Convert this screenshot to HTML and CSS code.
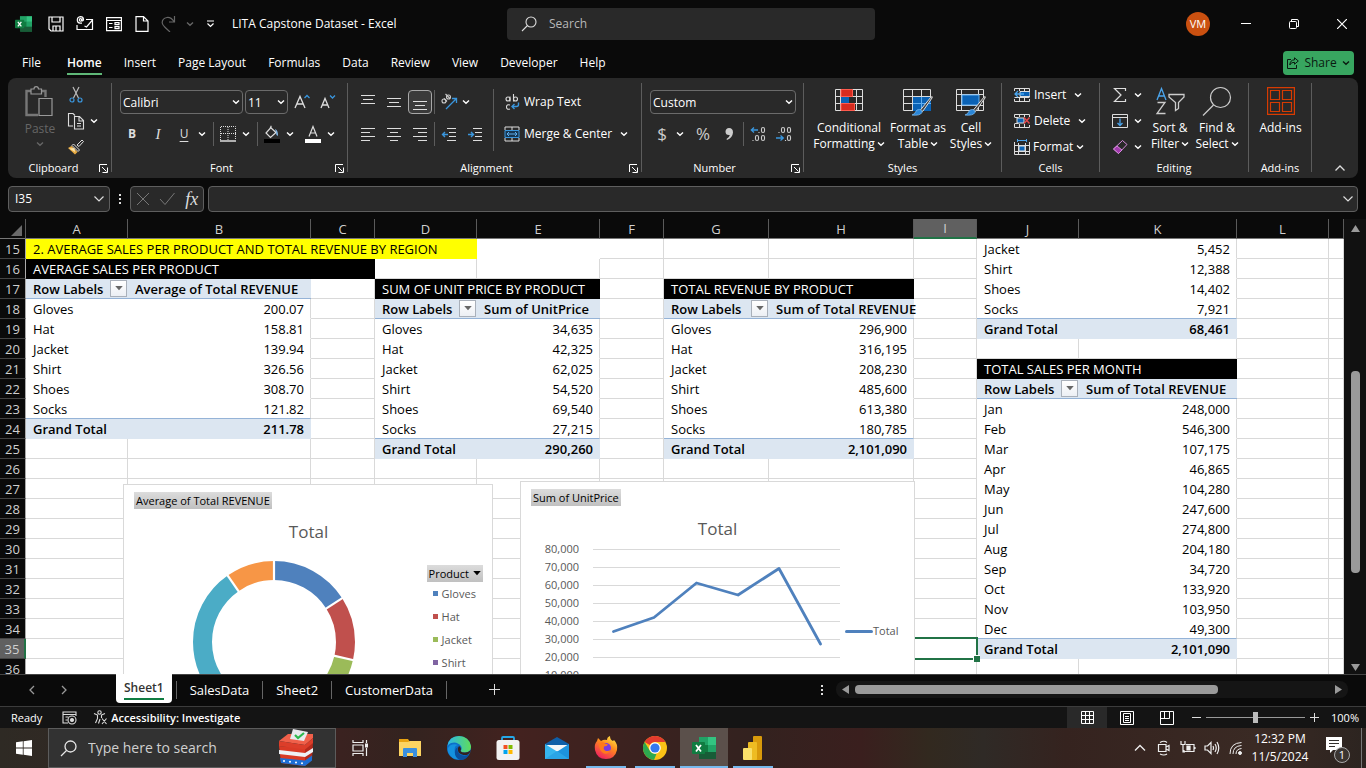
FILE: index.html
```html
<!DOCTYPE html>
<html lang="en">
<head>
<meta charset="utf-8">
<title>LITA Capstone Dataset - Excel</title>
<link rel="stylesheet" href="styles.css">
</head>
<body>
<svg class="defs" aria-hidden="true">
  <symbol id="chev" viewBox="0 0 8 8"><path d="M1 2.500l3 2.800 3-2.800" fill="none" stroke="currentColor" stroke-width="1.400"/></symbol>
  <symbol id="launch" viewBox="0 0 9 9"><path d="M.5 8V.5H8M3 3l4.500 4.500M8.500 3.500v5h-5" fill="none" stroke="currentColor"/></symbol>
  <symbol id="tri" viewBox="0 0 9 6"><path d="M0 0h9L4.500 5z" fill="currentColor"/></symbol>
  <symbol id="excel" viewBox="0 0 24 22">
    <path d="M7 0h17v22H7z" fill="#185c37"/><path d="M7 0h9v8H7z" fill="#21a366"/><path d="M16 0h8v8h-8z" fill="#33c481"/><path d="M7 8h9v7H7z" fill="#107c41"/><path d="M16 8h8v7h-8z" fill="#21a366"/><path d="M8 15h16v7H8z" fill="#185c37"/>
    <rect y="5" width="13" height="12" rx="1" fill="#107c41"/><path d="M4 8l5 6.500M9 8l-5 6.500" stroke="#fff" stroke-width="1.800"/>
  </symbol>
</svg>

<header class="titlebar">
  <div class="quick">
    <svg class="applogo" width="17" height="16"><use href="#excel"/></svg>
    <button class="q" aria-label="Save"><svg width="16" height="16" fill="none" stroke="#fff" stroke-width="1.200"><path d="M1 1h14v14H3l-2-2zM4 1v5h8V1M5 15v-5h7v5M8 10v5"/></svg></button>
    <button class="q wide" aria-label="Email"><svg width="18" height="16" fill="none" stroke="#fff" stroke-width="1.200"><path d="M1 9v4.500h15.500V3.500H10M8.500 10l2 1L16.500 4"/><path d="M6 2.500v2.300q1.500.4 1.500-1.600Q7.200.6 4.500.6 1.300 1 1.300 4T4 7.200h2"/><circle cx="4.500" cy="3.900" r="1.200"/></svg></button>
    <button class="q" aria-label="Form"><svg width="16" height="16" fill="none" stroke="#fff" stroke-width="1.200"><path d="M.6 1.600h14.800v13H.6zM.6 4.500h14.800M3 7.500h3.500M3 11.500h3.500M9 6.700h4v2H9zM9 10.700h4v2H9z"/></svg></button>
    <button class="q" aria-label="New"><svg width="14" height="16" fill="none" stroke="#fff" stroke-width="1.200"><path d="M1 .6h7.500L13 5v10.400H1zM8.500.6V5H13"/></svg></button>
    <button class="q dim redo" aria-label="Redo"><svg width="15" height="16" fill="none" stroke="currentColor" stroke-width="1.200"><path d="M13.500 0v6H8M13 5.500Q10 1 6 1.500 1 2.500 1.200 7q.3 2 3 4.500L9 16"/></svg><svg width="8" height="8"><use href="#chev"/></svg></button>
    <button class="q custom" aria-label="Customize toolbar"><svg width="9" height="8" fill="none" stroke="#fff" stroke-width="1.200"><path d="M1 1h7M1.500 3.500l3 3 3-3"/></svg></button>
    <h1 class="doc">LITA Capstone Dataset - Excel</h1>
  </div>
  <label class="search"><svg width="16" height="16" fill="none" stroke="#ddd" stroke-width="1.100"><circle cx="10" cy="6" r="5"/><path d="M6.500 9.500L1 15"/></svg><input type="search" placeholder="Search" aria-label="Search"></label>
  <div class="window">
    <button class="avatar" aria-label="Account">VM</button>
    <button class="wbtn" aria-label="Minimize"><svg width="10" height="10"><path d="M0 4.500h10" stroke="#fff"/></svg></button>
    <button class="wbtn" aria-label="Restore"><svg width="10" height="10" fill="none" stroke="#fff"><rect x=".5" y="2.500" width="7" height="7" rx="1"/><path d="M2.500 2V.5H8q1.500 0 1.500 1.500v5.500H8"/></svg></button>
    <button class="wbtn" aria-label="Close"><svg width="10" height="10"><path d="M0 0l10 10M10 0L0 10" stroke="#fff" stroke-width="1.200"/></svg></button>
  </div>
</header>

<nav class="tabs">
  <a href="#file" class="first">File</a><a href="#home" class="on">Home</a><a href="#insert">Insert</a><a href="#layout">Page Layout</a><a href="#formulas">Formulas</a><a href="#data">Data</a><a href="#review">Review</a><a href="#view">View</a><a href="#developer">Developer</a><a href="#help">Help</a>
  <button class="share"><svg width="12" height="12" fill="none" stroke="#0a1a10"><path d="M4 2.500H.5v9h9V8M7.500.8L11.300 4 7.500 7.200V5.300Q4 5 2.800 8 3 3 7.500 2.800z"/></svg>Share<svg width="8" height="8"><use href="#chev"/></svg></button>
</nav>

<section class="ribbon">
  <div class="group g-clip">
    <div class="body three">
      <button class="big dim paste"><svg width="32" height="32" fill="none" stroke="#999" stroke-width="1.200"><path d="M7 5H2.500v24H14M17 5h4.500v6" stroke-width="2.400" stroke="#777"/><path d="M7 3h3q0-2.400 2.200-2.400T14.500 3h3v5H7z"/><path d="M15 12.500h13v17H15z"/></svg><span>Paste</span><svg width="8" height="8"><use href="#chev"/></svg></button>
      <div class="col">
        <div class="row"><button class="b" aria-label="Cut"><svg width="16" height="18" fill="none" stroke="#bbb" stroke-width="1.200"><path d="M5 1l5.500 11M11 1L5.500 12"/><g stroke="#3a96dd"><circle cx="4" cy="14" r="2"/><circle cx="12" cy="14" r="2"/></g></svg></button></div>
        <div class="row"><button class="b" aria-label="Copy"><svg width="18" height="18" fill="none" stroke="#ddd" stroke-width="1.100"><path d="M6 14H1.500V1.500H6l2 2M7.500 4.500h5l4 4V17h-9zM12 4.500V9h4.500M10 11.500h4M10 14h4"/></svg></button><button class="c" aria-label="Copy options"><svg width="8" height="8"><use href="#chev"/></svg></button></div>
        <div class="row"><button class="b" aria-label="Format Painter"><svg width="18" height="18"><path d="M10 7l5-5 1.500 1.500-4.500 5z" fill="none" stroke="#ddd"/><path d="M6.500 6l6 6-1.500 1.500-6-6z" fill="none" stroke="#ddd"/><path d="M4.500 8l6 6L8 16.500 1 10z" fill="#e8ab43"/><path d="M2 10.500l5.500-.5L8 14z" fill="#fbe3a8"/></svg></button></div>
      </div>
    </div>
    <div class="foot"><span>Clipboard</span><button class="l" aria-label="Clipboard options"><svg width="9" height="9"><use href="#launch"/></svg></button></div>
  </div>
  <i class="sep"></i>
  <div class="group g-font">
    <div class="body two">
      <div class="row near">
        <label class="pick"><select class="face" aria-label="Font"><option>Calibri</option></select><svg width="8" height="8"><use href="#chev"/></svg></label>
        <label class="pick"><select class="size" aria-label="Font size"><option>11</option></select><svg width="8" height="8"><use href="#chev"/></svg></label>
        <button class="b" aria-label="Increase font size"><svg width="18" height="16" fill="none" stroke="#ddd"><path d="M2 14L7 2.500 12 14M4 10h6.300" stroke-width="1.300"/><path d="M11.500 4L14 1.500 16.500 4" stroke="#3a96dd" stroke-width="1.300"/></svg></button>
        <button class="b" aria-label="Decrease font size"><svg width="18" height="16" fill="none" stroke="#ddd"><path d="M2 14L6 4.500 10 14M3.500 11h5" stroke-width="1.300"/><path d="M11 1.500L13.500 4 16 1.500" stroke="#3a96dd" stroke-width="1.300"/></svg></button>
      </div>
      <div class="row">
        <button class="b strong">B</button><button class="b ital gap2">I</button><button class="b under gap2">U</button><button class="c" aria-label="Underline options"><svg width="8" height="8"><use href="#chev"/></svg></button>
        <i class="vs"></i>
        <button class="b" aria-label="Borders"><svg width="16" height="16" fill="none" stroke="#ddd"><path d="M.5 14V.5h15V14M8 1v13M1 7.500h15" stroke-dasharray="1 1"/><path d="M0 15h16" stroke-width="1.500"/></svg></button><button class="c" aria-label="Border options"><svg width="8" height="8"><use href="#chev"/></svg></button>
        <i class="vs"></i>
        <button class="b" aria-label="Fill colour"><svg width="18" height="18"><path d="M7 2l6 5.500-5.500 5-4.500-4.500 5-5.500V.8" fill="none" stroke="#ddd" stroke-width="1.200"/><path d="M12 4q3.500 1.500 2.800 7-2-1-1.800-4z" fill="#83b9e8"/><path d="M1 14h16v4H1z" fill="#000"/></svg></button><button class="c" aria-label="Fill options"><svg width="8" height="8"><use href="#chev"/></svg></button>
        <button class="b gap5" aria-label="Font colour"><svg width="18" height="18"><path d="M5 11.500L9 1.500l4 10M6.500 8h5" fill="none" stroke="#ddd" stroke-width="1.200"/><path d="M1 14h16v4H1z" fill="#fff"/></svg></button><button class="c" aria-label="Font colour options"><svg width="8" height="8"><use href="#chev"/></svg></button>
      </div>
    </div>
    <div class="foot"><span>Font</span><button class="l" aria-label="Font options"><svg width="9" height="9"><use href="#launch"/></svg></button></div>
  </div>
  <i class="sep"></i>
  <div class="group g-align">
    <div class="body">
      <div class="two">
        <div class="row even">
          <button class="b" aria-label="Top align"><svg width="16" height="16" stroke="#ddd"><path d="M1 1.500h14M3 5.500h10M1 9.500h14"/></svg></button>
          <button class="b" aria-label="Middle align"><svg width="16" height="16" stroke="#ddd"><path d="M1 4.500h14M3 8.500h10M1 12.500h14"/></svg></button>
          <button class="b boxed" aria-label="Bottom align"><svg width="16" height="16" stroke="#ddd"><path d="M1 7.500h14M3 11.500h10M1 15.500h14"/></svg></button>
          <i class="vs tight"></i>
          <button class="b" aria-label="Orientation"><svg width="18" height="18" fill="none" stroke="#3a96dd" stroke-width="1.300"><path d="M6 16L16 6M12 5.500h4.500V10"/><g stroke="#ccc" stroke-width="1.100"><circle cx="4" cy="8" r="2"/><path d="M4 5.500l3 3"/><circle cx="8.500" cy="4" r="2"/><path d="M5.500 1l4.500 4.500"/></g></svg></button><button class="c snug" aria-label="Orientation options"><svg width="8" height="8"><use href="#chev"/></svg></button>
        </div>
        <div class="row even">
          <button class="b" aria-label="Align left"><svg width="16" height="16" stroke="#ddd"><path d="M1 2.500h14M1 6.500h9M1 10.500h14M1 14.500h9"/></svg></button>
          <button class="b" aria-label="Center"><svg width="16" height="16" stroke="#ddd"><path d="M1 2.500h14M4 6.500h8M1 10.500h14M4 14.500h8"/></svg></button>
          <button class="b" aria-label="Align right"><svg width="16" height="16" stroke="#ddd"><path d="M1 2.500h14M6 6.500h9M1 10.500h14M6 14.500h9"/></svg></button>
          <i class="vs tight"></i>
          <button class="b" aria-label="Decrease indent"><svg width="16" height="16" stroke="#ddd" fill="none"><path d="M6 2.500h9M8 6.500h7M8 10.500h7M6 14.500h9"/><path d="M7 8.500H1.500M4 6L1.500 8.500 4 11" stroke="#3a96dd" stroke-width="1.400"/></svg></button>
          <button class="b" aria-label="Increase indent"><svg width="16" height="16" stroke="#ddd" fill="none"><path d="M6 2.500h9M8 6.500h7M8 10.500h7M6 14.500h9"/><path d="M1 8.500h5.500M4 6l2.500 2.500L4 11" stroke="#3a96dd" stroke-width="1.400"/></svg></button>
        </div>
      </div>
      <i class="mid"></i>
      <div class="two wraps">
        <button class="wide-b"><svg width="16" height="18" fill="none" stroke="#ddd" stroke-width="1.100"><circle cx="4" cy="6" r="2"/><path d="M6 3.500v5M9.500 1v7.500"/><circle cx="11.500" cy="6" r="2"/><path d="M6 12Q2.500 11 2.500 14T6 16"/><path d="M14.500 9.500v2q0 2-2 2H8M10.500 11L8 13.500l2.500 2.500" stroke="#3a96dd" stroke-width="1.400"/></svg>Wrap Text</button>
        <button class="wide-b"><svg width="16" height="16" fill="none" stroke="#ddd"><path d="M1 4V1h14v3M1 12v3h14v-3M8 1v3M8 12v3"/><path d="M1 4.500h14v7H1z" fill="#16354f" stroke="#3a96dd"/><path d="M3 8h10M5 6L3 8l2 2M11 6l2 2-2 2" stroke="#5fb0f0"/></svg>Merge &amp; Center<svg class="far" width="8" height="8"><use href="#chev"/></svg></button>
      </div>
    </div>
    <div class="foot"><span>Alignment</span><button class="l" aria-label="Alignment options"><svg width="9" height="9"><use href="#launch"/></svg></button></div>
  </div>
  <i class="sep"></i>
  <div class="group g-num">
    <div class="body two">
      <div class="row"><label class="pick"><select class="fmt" aria-label="Number format"><option>Custom</option></select><svg width="8" height="8"><use href="#chev"/></svg></label></div>
      <div class="row">
        <button class="b glyph">$</button><button class="c" aria-label="Currency options"><svg width="8" height="8"><use href="#chev"/></svg></button>
        <button class="b glyph gap5" aria-label="Percent">%</button>
        <button class="b gap2" aria-label="Comma style"><svg width="10" height="16"><path d="M5 2q4 .2 4 4.500Q8.500 12 3 14l-.5-1q3-1.600 3.300-4Q1.500 9.500 1.500 5.500 1.800 2.200 5 2z" fill="#ccc"/></svg></button>
        <i class="vs tight"></i>
        <button class="b dec" aria-label="Increase decimal"><svg width="16" height="16" fill="none" stroke="#ccc" stroke-width="1.100"><rect x="11.500" y="1.500" width="3" height="5" rx="1.500"/><rect x="5.500" y="9.500" width="3" height="5" rx="1.500"/><rect x="11.500" y="9.500" width="3" height="5" rx="1.500"/><path d="M9 6v1M3 14v1"/><path d="M8 4H1M4 1.500L1.300 4 4 6.500" stroke="#3a96dd" stroke-width="1.300"/></svg></button>
        <button class="b gap2" aria-label="Decrease decimal"><svg width="16" height="16" fill="none" stroke="#ccc" stroke-width="1.100"><rect x="5.500" y="1.500" width="3" height="5" rx="1.500"/><rect x="11.500" y="1.500" width="3" height="5" rx="1.500"/><rect x="11.500" y="9.500" width="3" height="5" rx="1.500"/><path d="M3 6v1M9.500 14v1"/><path d="M0 12h7M4.500 9.500L7.300 12l-2.800 2.500" stroke="#3a96dd" stroke-width="1.300"/></svg></button>
      </div>
    </div>
    <div class="foot"><span>Number</span><button class="l" aria-label="Number options"><svg width="9" height="9"><use href="#launch"/></svg></button></div>
  </div>
  <i class="sep"></i>
  <div class="group g-style">
    <div class="body">
      <button class="big w80"><svg width="30" height="30"><path d="M1.500 3.500h27v21h-27zM6.500 3.500v21M14.500 3.500v21M22.500 3.500v21M1.500 10.500h27M1.500 17.500h27" fill="none" stroke="#ddd"/><path d="M7 3.500h11.500v7H7zM7 17.500h13.500v7H7z" fill="#d62b1f" stroke="#ff5a4d"/><path d="M7 11h8v6H7z" fill="#0a62b5"/></svg><span>Conditional<br>Formatting<svg width="8" height="8"><use href="#chev"/></svg></span></button>
      <button class="big w58"><svg width="32" height="30"><path d="M1.500 3.500h27v21h-27zM10.500 3.500v21M19.500 3.500v21M1.500 10.500h27M1.500 17.500h27" fill="none" stroke="#ddd"/><path d="M11 11h18v14H11z" fill="#0a62b5"/><path d="M11 17.500h18M19.500 11v13" stroke="#61aef0"/><path d="M29 11q2-1 1 1L21 25q-2 1.500-3-.5z" fill="#444" stroke="#ddd"/><path d="M17.500 23.500q3 .5 2.500 3-2 3.500-10 2.500 3-1 3.500-3 1-2.800 4-2.500z" fill="#2a86d8" stroke="#7fc0f5" stroke-width=".7"/></svg><span>Format as<br>Table<svg width="8" height="8"><use href="#chev"/></svg></span></button>
      <button class="big w48"><svg width="32" height="30"><path d="M1.500 3.500h27v21h-27zM6.500 3.500v21M23.500 3.500v21M1.500 8.500h27M1.500 19.500h27" fill="none" stroke="#ddd"/><path d="M7 9h17v10H7z" fill="#0a62b5" stroke="#61aef0"/><path d="M29 11q2-1 1 1L21 25q-2 1.500-3-.5z" fill="#444" stroke="#ddd"/><path d="M17.500 23.500q3 .5 2.500 3-2 3.500-10 2.500 3-1 3.500-3 1-2.800 4-2.500z" fill="#2a86d8" stroke="#7fc0f5" stroke-width=".7"/></svg><span>Cell<br>Styles<svg width="8" height="8"><use href="#chev"/></svg></span></button>
    </div>
    <div class="foot"><span>Styles</span></div>
  </div>
  <i class="sep"></i>
  <div class="group g-cells">
    <div class="body col">
      <button class="wide-b cell"><svg width="16" height="16" fill="none" stroke="#ddd"><path d="M.5 4V1.500h15V4M.5 12v2.500h15V12M5.500 1v3M10.500 1v3M5.500 11v3M10.500 11v3M.5 10.500h15"/><path d="M6 4.500h10v5H6z" fill="#0a62b5"/><path d="M10 7H1M4 4L1 7l3 3" stroke="#4ba6ee" stroke-width="1.300"/></svg>Insert<svg class="mid-c" width="8" height="8"><use href="#chev"/></svg></button>
      <button class="wide-b cell"><svg width="16" height="16" fill="none" stroke="#ddd"><path d="M.5 4V1.500h15V4M.5 11v3.500h15V12M5.500 1v3M10.500 1v3M5.500 11v3M10.500 11v3M.5 4.500h4M.5 10.500h4"/><path d="M3 5h7v5H3z" fill="#0a62b5"/><path d="M10 4.500l5.500 6M15.500 4.500l-5.500 6" stroke="#e5484d" stroke-width="1.500"/></svg>Delete<svg class="mid-c" width="8" height="8"><use href="#chev"/></svg></button>
      <button class="wide-b cell tightly"><svg width="16" height="16" fill="none" stroke="#ddd"><path d="M.5 3v12.500h15V3M4.500 4v11M11.500 4v11M.5 6.500h15M.5 12.500h15"/><path d="M5 7h6v5H5z" fill="#0a62b5"/><path d="M3.500 0v3M12.500 0v3M4 1.500h8" stroke="#4ba6ee"/></svg>Format<svg width="8" height="8"><use href="#chev"/></svg></button>
    </div>
    <div class="foot"><span>Cells</span></div>
  </div>
  <i class="sep"></i>
  <div class="group g-edit">
    <div class="body">
      <div class="col edit-col">
        <div class="row"><button class="b" aria-label="AutoSum"><svg width="14" height="16" fill="none" stroke="#ddd" stroke-width="1.200"><path d="M12.500 4V1.500h-11L8 8l-6.500 6.500h11V12"/></svg></button><button class="c" aria-label="AutoSum options"><svg width="8" height="8"><use href="#chev"/></svg></button></div>
        <div class="row"><button class="b" aria-label="Fill"><svg width="16" height="16" fill="none" stroke="#ddd"><path d="M.5 1.500h15v13H.5zM.5 4.500h15"/><path d="M8 5.500v7M5.500 10L8 12.500l2.500-2.500" stroke="#4ba6ee" stroke-width="1.300"/></svg></button><button class="c" aria-label="Fill options"><svg width="8" height="8"><use href="#chev"/></svg></button></div>
        <div class="row"><button class="b" aria-label="Clear"><svg width="16" height="16"><path d="M10.500 1.500l4.500 4-8.500 9-5-4.500z" fill="none" stroke="#d58bdc"/><path d="M5 7l5 4-3.500 3.500-5-4.500z" fill="#a23aad" stroke="#d58bdc"/></svg></button><button class="c" aria-label="Clear options"><svg width="8" height="8"><use href="#chev"/></svg></button></div>
      </div>
      <button class="big w46"><svg width="30" height="30" fill="none" stroke-width="1.300"><path d="M2 14L6.500 2.500 11 14M3.500 10h6" stroke="#4ba6ee"/><path d="M2.500 16.500h7.500L2 27.500h8.500" stroke="#ccc"/><path d="M14 8.500h15v2.500l-5.500 5.500v6l-3 2v-8L14 11z" stroke="#ccc"/></svg><span>Sort &amp;<br>Filter<svg width="8" height="8"><use href="#chev"/></svg></span></button>
      <button class="big w48"><svg width="30" height="30" fill="none" stroke="#ccc" stroke-width="1.200"><circle cx="18.500" cy="11.500" r="10"/><path d="M11.500 19L1 29.500"/></svg><span>Find &amp;<br>Select<svg width="8" height="8"><use href="#chev"/></svg></span></button>
    </div>
    <div class="foot"><span>Editing</span></div>
  </div>
  <i class="sep"></i>
  <div class="group g-add">
    <div class="body"><button class="big w63"><svg width="28" height="30" fill="none" stroke="#d83b01" stroke-width="1.200"><path d="M.6 1.600h26.800v26.800H.6zM3.500 4.500h9v9h-9zM15.500 4.500h9v9h-9zM3.500 16.500h9v9h-9zM15.500 16.500h9v9h-9z"/></svg><span>Add-ins</span></button></div>
    <div class="foot"><span>Add-ins</span></div>
  </div>
  <i class="sep"></i>
  <button class="collapse" aria-label="Collapse the ribbon"><svg width="12" height="8" fill="none" stroke="#ddd" stroke-width="1.300"><path d="M1.500 6.500L6 2l4.500 4.500"/></svg></button>
</section>

<section class="formula">
  <label class="name"><input type="text" value="I35" aria-label="Name box"><svg width="12" height="8" fill="none" stroke="#ddd" stroke-width="1.200"><path d="M1.500 1.500L6 6l4.500-4.500"/></svg></label>
  <span class="dots" aria-hidden="true"></span>
  <div class="fx">
    <button aria-label="Cancel"><svg width="14" height="14" stroke="#777" fill="none"><path d="M1 1l12 12M13 1L1 13"/></svg></button>
    <button aria-label="Enter"><svg width="16" height="14" stroke="#777" fill="none"><path d="M1 7l5 5.500L15.500 1"/></svg></button>
    <button class="fn">fx</button>
  </div>
  <label class="bar"><input type="text" aria-label="Formula bar"><svg width="12" height="8" fill="none" stroke="#ddd" stroke-width="1.200"><path d="M1.500 1.500L6 6l4.500-4.500"/></svg></label>
</section>

<main class="work">
  <div class="sheet">
    <table class="grid">
      <colgroup><col class="w26"><col class="w102"><col class="w183"><col class="w64"><col class="w102"><col class="w123"><col class="w64"><col class="w105"><col class="w145"><col class="w63"><col class="w102"><col class="w158"><col class="w92"><col></colgroup>
      <thead><tr><th class="corner"><svg width="11" height="11"><path d="M11 0v11H0z" fill="#6a6a6a"/></svg></th><th>A</th><th>B</th><th>C</th><th>D</th><th>E</th><th>F</th><th>G</th><th>H</th><th class="cur">I</th><th>J</th><th>K</th><th>L</th><th></th></tr></thead>
      <tbody>
        <tr><th>15</th><td colspan="4" class="yel">2. AVERAGE SALES PER PRODUCT AND TOTAL REVENUE BY REGION</td><td class="l"></td><td></td><td></td><td></td><td></td><td class="l">Jacket</td><td class="n">5,452</td><td></td><td></td></tr>
        <tr><th>16</th><td colspan="3" class="blk">AVERAGE SALES PER PRODUCT</td><td></td><td></td><td></td><td></td><td></td><td></td><td class="l">Shirt</td><td class="n">12,388</td><td></td><td></td></tr>
        <tr><th>17</th><td class="hd"><div>Row Labels<button aria-label="Filter"><svg width="8" height="5"><use href="#tri"/></svg></button></div></td><td class="hd">Average of Total REVENUE</td><td></td><td colspan="2" class="blk">SUM OF UNIT PRICE BY PRODUCT</td><td></td><td colspan="2" class="blk">TOTAL REVENUE BY PRODUCT</td><td></td><td class="l">Shoes</td><td class="n">14,402</td><td></td><td></td></tr>
        <tr><th>18</th><td class="l">Gloves</td><td class="n">200.07</td><td></td><td class="hd"><div>Row Labels<button aria-label="Filter"><svg width="8" height="5"><use href="#tri"/></svg></button></div></td><td class="hd">Sum of UnitPrice</td><td></td><td class="hd"><div>Row Labels<button aria-label="Filter"><svg width="8" height="5"><use href="#tri"/></svg></button></div></td><td class="hd">Sum of Total REVENUE</td><td></td><td class="l ln">Socks</td><td class="n ln">7,921</td><td></td><td></td></tr>
        <tr><th>19</th><td class="l">Hat</td><td class="n">158.81</td><td></td><td class="l">Gloves</td><td class="n">34,635</td><td></td><td class="l">Gloves</td><td class="n">296,900</td><td></td><td class="l gt">Grand Total</td><td class="n gt">68,461</td><td></td><td></td></tr>
        <tr><th>20</th><td class="l">Jacket</td><td class="n">139.94</td><td></td><td class="l">Hat</td><td class="n">42,325</td><td></td><td class="l">Hat</td><td class="n">316,195</td><td></td><td></td><td></td><td></td><td></td></tr>
        <tr><th>21</th><td class="l">Shirt</td><td class="n">326.56</td><td></td><td class="l">Jacket</td><td class="n">62,025</td><td></td><td class="l">Jacket</td><td class="n">208,230</td><td></td><td colspan="2" class="blk">TOTAL SALES PER MONTH</td><td></td><td></td></tr>
        <tr><th>22</th><td class="l">Shoes</td><td class="n">308.70</td><td></td><td class="l">Shirt</td><td class="n">54,520</td><td></td><td class="l">Shirt</td><td class="n">485,600</td><td></td><td class="hd"><div>Row Labels<button aria-label="Filter"><svg width="8" height="5"><use href="#tri"/></svg></button></div></td><td class="hd">Sum of Total REVENUE</td><td></td><td></td></tr>
        <tr><th>23</th><td class="l ln">Socks</td><td class="n ln">121.82</td><td></td><td class="l">Shoes</td><td class="n">69,540</td><td></td><td class="l">Shoes</td><td class="n">613,380</td><td></td><td class="l">Jan</td><td class="n">248,000</td><td></td><td></td></tr>
        <tr><th>24</th><td class="l gt">Grand Total</td><td class="n gt">211.78</td><td></td><td class="l ln">Socks</td><td class="n ln">27,215</td><td></td><td class="l ln">Socks</td><td class="n ln">180,785</td><td></td><td class="l">Feb</td><td class="n">546,300</td><td></td><td></td></tr>
        <tr><th>25</th><td></td><td></td><td></td><td class="l gt">Grand Total</td><td class="n gt">290,260</td><td></td><td class="l gt">Grand Total</td><td class="n gt">2,101,090</td><td></td><td class="l">Mar</td><td class="n">107,175</td><td></td><td></td></tr>
        <tr><th>26</th><td></td><td></td><td></td><td></td><td></td><td></td><td></td><td></td><td></td><td class="l">Apr</td><td class="n">46,865</td><td></td><td></td></tr>
        <tr><th>27</th><td></td><td></td><td></td><td></td><td></td><td></td><td></td><td></td><td></td><td class="l">May</td><td class="n">104,280</td><td></td><td></td></tr>
        <tr><th>28</th><td></td><td></td><td></td><td></td><td></td><td></td><td></td><td></td><td></td><td class="l">Jun</td><td class="n">247,600</td><td></td><td></td></tr>
        <tr><th>29</th><td></td><td></td><td></td><td></td><td></td><td></td><td></td><td></td><td></td><td class="l">Jul</td><td class="n">274,800</td><td></td><td></td></tr>
        <tr><th>30</th><td></td><td></td><td></td><td></td><td></td><td></td><td></td><td></td><td></td><td class="l">Aug</td><td class="n">204,180</td><td></td><td></td></tr>
        <tr><th>31</th><td></td><td></td><td></td><td></td><td></td><td></td><td></td><td></td><td></td><td class="l">Sep</td><td class="n">34,720</td><td></td><td></td></tr>
        <tr><th>32</th><td></td><td></td><td></td><td></td><td></td><td></td><td></td><td></td><td></td><td class="l">Oct</td><td class="n">133,920</td><td></td><td></td></tr>
        <tr><th>33</th><td></td><td></td><td></td><td></td><td></td><td></td><td></td><td></td><td></td><td class="l">Nov</td><td class="n">103,950</td><td></td><td></td></tr>
        <tr><th>34</th><td></td><td></td><td></td><td></td><td></td><td></td><td></td><td></td><td></td><td class="l ln">Dec</td><td class="n ln">49,300</td><td></td><td></td></tr>
        <tr><th class="cur">35</th><td></td><td></td><td></td><td></td><td></td><td></td><td></td><td></td><td class="active"></td><td class="l gt">Grand Total</td><td class="n gt">2,101,090</td><td></td><td></td></tr>
        <tr><th>36</th><td></td><td></td><td></td><td></td><td></td><td></td><td></td><td></td><td></td><td></td><td></td><td></td><td></td></tr>
      </tbody>
    </table>

    <figure class="chart donut">
      <button class="field">Average of Total REVENUE</button>
      <figcaption>Total</figcaption>
      <div class="plot">
        <svg width="164" height="164" viewBox="-82 -82 164 164">
          <g fill="none" stroke-width="19" transform="rotate(-90)">
            <circle r="71.500" pathLength="1255.900" stroke="#4f81bd" stroke-dasharray="200.070 1255.900"/>
            <circle r="71.500" pathLength="1255.900" stroke="#c0504d" stroke-dasharray="158.810 1255.900" stroke-dashoffset="-200.070"/>
            <circle r="71.500" pathLength="1255.900" stroke="#9bbb59" stroke-dasharray="139.940 1255.900" stroke-dashoffset="-358.880"/>
            <circle r="71.500" pathLength="1255.900" stroke="#8064a2" stroke-dasharray="326.560 1255.900" stroke-dashoffset="-498.820"/>
            <circle r="71.500" pathLength="1255.900" stroke="#4bacc6" stroke-dasharray="308.700 1255.900" stroke-dashoffset="-825.380"/>
            <circle r="71.500" pathLength="1255.900" stroke="#f79646" stroke-dasharray="121.820 1255.900" stroke-dashoffset="-1134.080"/>
          </g>
          <g stroke="#fff" stroke-width="2.200">
            <path d="M0-60v-23"/><path d="M0-60v-23" transform="rotate(57.300)"/><path d="M0-60v-23" transform="rotate(102.900)"/><path d="M0-60v-23" transform="rotate(143)"/><path d="M0-60v-23" transform="rotate(236.600)"/><path d="M0-60v-23" transform="rotate(325.100)"/>
          </g>
        </svg>
        <div class="legend">
          <button class="field">Product<svg width="8" height="5"><use href="#tri"/></svg></button>
          <ul><li class="s1">Gloves</li><li class="s2">Hat</li><li class="s3">Jacket</li><li class="s4">Shirt</li></ul>
        </div>
      </div>
    </figure>

    <figure class="chart line">
      <button class="field">Sum of UnitPrice</button>
      <figcaption>Total</figcaption>
      <div class="plot">
        <ol class="axis"><li>80,000</li><li>70,000</li><li>60,000</li><li>50,000</li><li>40,000</li><li>30,000</li><li>20,000</li><li>10,000</li></ol>
        <svg width="247" height="144" fill="none">
          <path d="M0 8.500h247M0 26.500h247M0 44.500h247M0 62.500h247M0 80.500h247M0 98.500h247M0 116.500h247M0 134.500h247" stroke="#d9d9d9"/>
          <path d="M20.500 90.500L61 76.500l42.500-34.500L145 54l41-26.500L227.500 103" stroke="#4f81bd" stroke-width="2.800" stroke-linejoin="round" stroke-linecap="round"/>
        </svg>
        <div class="key"><i></i>Total</div>
      </div>
    </figure>
  </div>
  <div class="vscroll"><svg width="9" height="7"><path d="M4.500 0L9 7H0z" fill="#9a9a9a"/></svg><i></i><svg width="9" height="7"><path d="M4.500 7L9 0H0z" fill="#9a9a9a"/></svg></div>
</main>

<footer class="sheets">
  <button class="nav" aria-label="Previous sheet"><svg width="8" height="10" fill="none" stroke="#999" stroke-width="1.300"><path d="M6 1L2 5l4 4"/></svg></button>
  <button class="nav" aria-label="Next sheet"><svg width="8" height="10" fill="none" stroke="#999" stroke-width="1.300"><path d="M2 1l4 4-4 4"/></svg></button>
  <a class="stab on" href="#sheet1"><span>Sheet1</span></a>
  <a class="stab second" href="#salesdata">SalesData</a>
  <a class="stab" href="#sheet2">Sheet2</a>
  <a class="stab" href="#customerdata">CustomerData</a>
  <button class="add" aria-label="New sheet"><svg width="11" height="11" stroke="#ddd"><path d="M5.500 0v11M0 5.500h11"/></svg></button>
  <div class="right">
    <span class="dots" aria-hidden="true"></span>
    <div class="hscroll"><svg width="7" height="9"><path d="M0 4.500L7 0v9z" fill="#9a9a9a"/></svg><i></i><svg width="7" height="9"><path d="M7 4.500L0 0v9z" fill="#9a9a9a"/></svg></div>
  </div>
</footer>

<div class="status">
  <span class="ready">Ready</span>
  <button class="rec" aria-label="Record macro"><svg width="15" height="14" fill="none" stroke="#ddd" stroke-width="1.100"><path d="M6 12H1V1h13v4M1 3.500h13M3.500 6h3M3.500 9h2"/><circle cx="10" cy="9" r="4"/><circle cx="10" cy="9" r="1.500" fill="#ddd"/></svg></button>
  <button class="acc"><svg width="15" height="15" fill="none" stroke="#ddd" stroke-width="1.100"><circle cx="6.500" cy="2.500" r="1.700"/><path d="M1 3.500l3.500 1.500v3.500L2.500 13M12 3.500L8.500 5v3M7 9l-1.500 4.500M9 8.500l4.500 5.500M13.500 8.500L9 14"/></svg>Accessibility: Investigate</button>
  <div class="right">
    <button class="view on" aria-label="Normal view"><svg width="13" height="13" fill="none" stroke="#fff"><path d="M.5.5h12v12H.5zM4.500 0v13M8.500 0v13M0 4.500h13M0 8.500h13"/></svg></button>
    <button class="view" aria-label="Page layout view"><svg width="14" height="14" fill="none" stroke="#fff"><path d="M.5.5h13v13H.5zM3.500 2.500h7v9h-7zM5 5.500h4M5 7.500h4M5 9.500h4"/></svg></button>
    <button class="view" aria-label="Page break view"><svg width="14" height="14" fill="none" stroke="#fff"><path d="M.5.5h13v13H.5zM4.500.5v7M9.500.5v7M.5 7.500h9"/></svg></button>
    <button class="z" aria-label="Zoom out"><svg width="9" height="9" stroke="#ddd"><path d="M0 4.500h9"/></svg></button>
    <input class="zoom" type="range" min="0" max="100" value="50" aria-label="Zoom">
    <button class="z" aria-label="Zoom in"><svg width="9" height="9" stroke="#ddd"><path d="M0 4.500h9M4.500 0v9"/></svg></button>
    <span class="pct">100%</span>
  </div>
</div>

<div class="taskbar">
  <button class="start" aria-label="Start"><svg width="16" height="16" fill="#fff"><path d="M0 2.300l6.800-1v6.200H0zM7.600 1.200L16 0v7.500H7.600zM0 8.400h6.800v6.300l-6.800-1zM7.600 8.400H16V16l-8.400-1.200z"/></svg></button>
  <label class="tsearch"><svg width="17" height="17" fill="none" stroke="#e6e6e6" stroke-width="1.300"><circle cx="10.500" cy="6.500" r="5.500"/><path d="M6.500 10.500L1 16"/></svg><input type="search" placeholder="Type here to search" aria-label="Type here to search">
    <svg width="36" height="38"><path d="M1 17l26 2v18l-24-3z" fill="#d93a26"/><path d="M27 19l8-6-1 18-7 6z" fill="#b52a1c"/><path d="M1 21l26 3 8-5v4l-8 5-26-3z" fill="#eef1f6"/><path d="M2 29l25 2.500 7-5v5l-7 5.500-24-3z" fill="#1c6fd6"/><path d="M1 12L10 5h25v4l-8 7z" fill="#f0604a"/><path d="M1 12l26 4 8-7v5l-8 6.500L1 17z" fill="#dc3e2a"/><path d="M15 0l15 3-4 9-14-2z" fill="#e9e9ee"/><path d="M17 6l3 3 6-5" fill="none" stroke="#2db84d" stroke-width="2.200"/><g fill="#fff"><circle cx="6" cy="32" r="1"/><circle cx="12" cy="32.800" r="1"/><circle cx="18" cy="33.500" r="1"/><circle cx="24" cy="34.200" r="1"/></g></svg>
  </label>
  <div class="apps">
    <button aria-label="Task view"><svg width="18" height="16" fill="none" stroke="#eee" stroke-width="1.200"><path d="M1 0v2.500h10V0M1 5h10v6H1zM1 16v-2.500h10V16M14.500 0v3M14.500 8v8"/><path d="M13 3.500h3v4h-3z" fill="#eee" stroke="none"/></svg></button>
    <button aria-label="File Explorer"><svg width="22" height="20"><path d="M0 1h9l2 3h11v14H0z" fill="#e8a311"/><path d="M0 4h9l2-1h11v15H0z" fill="#fcd462"/><path d="M4 11q0-1 1-1h12q1 0 1 1v8h-4v-4H8v4H4z" fill="#3a8fde"/></svg></button>
    <button aria-label="Edge"><svg width="24" height="24"><defs><linearGradient id="eg" x1="0" x2="1"><stop offset="0" stop-color="#2cb8e8"/><stop offset="1" stop-color="#5fdc5a"/></linearGradient></defs><circle cx="12" cy="12" r="12" fill="#0c6fc9"/><path d="M.5 10Q2 0 12 0q10 .5 12 10 .5 6-6 6.500-4 0-4.500-1.500 2-2 .5-5Q10 5 4 7 1.500 8 .5 10z" fill="url(#eg)"/><path d="M8 11q-2 10 7 12-10 2-14-7Q0 12 3 9.500 7 7.500 11 9 8.500 9.500 8 11z" fill="#1491e0"/><path d="M11 11q-2 5 3 8 4 1.500 8-.5-3 6-9 5.500-6-3-5-9 .5-3 3-4z" fill="#0a4f9e"/><path d="M12 10q3 2 1.500 5 1 1.500 4.500 1.500 3 0 6-2.500-1 3-3 4.500-3 1-6 0Q10 17 11 12z" fill="#33211f"/></svg></button>
    <button aria-label="Microsoft Store"><svg width="24" height="24"><path d="M6 6V2q0-1 1-1h10q1 0 1 1v4" fill="none" stroke="#25a8e8" stroke-width="1.800"/><rect x=".5" y="4" width="23" height="20" rx="2.500" fill="#f2f2f2"/><path d="M7.500 9h4v4h-4z" fill="#f25022"/><path d="M12.500 9h4v4h-4z" fill="#7fba00"/><path d="M7.500 14h4v4h-4z" fill="#00a4ef"/><path d="M12.500 14h4v4h-4z" fill="#ffb900"/></svg></button>
    <button aria-label="Mail"><svg width="24" height="22"><path d="M0 7l12-7 12 7v15H0z" fill="#0f5fa8"/><path d="M2 8h20v7l-10 3L2 15z" fill="#f4f6f8"/><path d="M0 7l24 15H0z" fill="#36b5ee"/><path d="M24 7L10 16l14 6z" fill="#1d93dc"/><path d="M0 22l12-8 12 8z" fill="#2aa5e6"/></svg></button>
    <button class="open" aria-label="Firefox"><svg width="24" height="24"><defs><linearGradient id="ff" x1=".9" y1="0" x2=".3" y2="1"><stop offset="0" stop-color="#fff04a"/><stop offset=".45" stop-color="#ff8a1e"/><stop offset="1" stop-color="#f0205f"/></linearGradient></defs><path d="M3 5l1-3 3 3q3-2 6-1 0-3 3-4 0 4 3 5l1-1q4 4 3 10-2 9-11 9T1 14Q0 8 3 5z" fill="url(#ff)"/><circle cx="12" cy="12" r="5" fill="#7a3ce0"/><path d="M5 8q3-3 6-.5l3 1q-1 2-4 2-1 2 1 4 3 1.500 6-1-2 5-7 4Q5 15 5 8z" fill="#ff7a1c"/></svg></button>
    <button class="open" aria-label="Chrome"><svg width="24" height="24"><circle cx="12" cy="12" r="12" fill="#fbc116"/><path d="M1.600 6A12 12 0 0 1 22.400 6H12a6 6 0 0 0-5.200 3z" fill="#e33b2e"/><path d="M1.600 6L7 15a6 6 0 0 0 6.500 2.800L11 24A12 12 0 0 1 1.600 6z" fill="#2da94f"/><circle cx="12" cy="12" r="5.800" fill="#fff"/><circle cx="12" cy="12" r="4.600" fill="#3378ef"/></svg></button>
    <button class="open now" aria-label="Excel"><svg width="24" height="22"><use href="#excel"/></svg></button>
    <button class="open" aria-label="Power BI"><svg width="20" height="24"><rect x="10" width="9" height="24" rx="1" fill="#d99a0b"/><rect x="5" y="6" width="9" height="18" rx="1" fill="#eebc22"/><rect y="12" width="9" height="12" rx="1" fill="#f9e06a"/></svg></button>
  </div>
  <div class="tray">
    <button aria-label="Show hidden icons"><svg width="12" height="8" fill="none" stroke="#eee" stroke-width="1.300"><path d="M1 6.500l5-5 5 5"/></svg></button>
    <button aria-label="Meet now"><svg width="14" height="16" fill="none" stroke="#eee" stroke-width="1.200"><path d="M3 2.500q4-2.500 7 0M3 14q4 2 7 0M1.500 4.500H9v7H1.500zM9 7l3-1.500v5L9 9"/></svg></button>
    <button aria-label="Battery"><svg width="16" height="14" fill="none" stroke="#eee" stroke-width="1.200"><path d="M6 3.500h8v7H4V9M15 6v2M1 0v3.500h4V0M3 3.500V11h2"/><path d="M7 5h3v4H7z" fill="#eee"/></svg></button>
    <button aria-label="Volume"><svg width="16" height="14" fill="none" stroke="#eee" stroke-width="1.200"><path d="M1 5h2.500L7 1.500v11L3.500 9H1zM9 5q1 2 0 4M11 3q2.500 4 0 8M13 1q3.500 6 0 12"/></svg></button>
    <button aria-label="Network"><svg width="14" height="14" fill="none" stroke="#eee"><path d="M1 13Q1 2 12.500 1.500M4 13Q4 5 12.500 4.500M7 13Q7 8 12.500 7.500"/><circle cx="11" cy="12" r="1.500" fill="#eee"/></svg></button>
    <time class="clock">12:32 PM<br>11/5/2024</time>
    <button class="note" aria-label="Notifications"><svg width="24" height="24"><path d="M1 1h16v13H8l-3 3v-3H1z" fill="#fff"/><path d="M4 4.500h10M4 7.500h10M4 10.500h6" stroke="#33302d"/></svg><span>1</span></button>
  </div>
</div>
</body>
</html>
```

FILE: styles.css
```css
* { box-sizing: border-box; }
body { margin: 0; height: 100vh; overflow: hidden; display: flex; flex-direction: column; background: #0a0a0a; color: #fff; font: 12px/16px "Open Sans", "Noto Sans", sans-serif; }
button, input, select { font: inherit; color: inherit; background: none; border: 0; margin: 0; padding: 0; border-radius: 0; }
button { display: flex; align-items: center; justify-content: center; flex: none; }
a { color: inherit; text-decoration: none; }
svg { flex: none; display: block; }
i { flex: none; }
input { outline: 0; min-width: 0; }
input::placeholder { color: #b8b8b8; opacity: 1; }
.defs { position: absolute; width: 0; height: 0; }
.dim { color: #666; }

/* Title bar */
.titlebar { display: grid; grid-template-columns: minmax(0, 507fr) 368px minmax(0, 491fr); align-items: center; height: 48px; flex: none; }
.quick { display: flex; align-items: center; padding-left: 15px; }
.applogo { margin-right: 10px; }
.q { width: 28px; height: 28px; }
.q.wide { width: 30px; }
.q.redo { width: 42px; gap: 10px; }
.q.custom { width: 24px; }
.doc { margin: 0 0 0 10px; font-size: 12px; font-weight: 400; white-space: nowrap; }
.search { display: flex; align-items: center; gap: 12px; height: 32px; padding-left: 14px; background: #292929; border-radius: 4px; }
.search input { flex: 1; }
.window { display: flex; justify-content: flex-end; align-items: center; }
.avatar { width: 24px; height: 24px; margin-right: 12px; border-radius: 50%; background: #ca5010; font-size: 11px; }
.wbtn { width: 48px; height: 48px; }

/* Ribbon tabs */
.tabs { display: flex; align-items: center; gap: 22px; height: 30px; flex: none; padding: 0 12px 0 22px; }
.tabs a { height: 24px; padding-top: 2px; line-height: 20px; }
.tabs .first { margin-right: 4px; }
.tabs .on { font-weight: 600; border-bottom: 2px solid #5fb878; }
.share { margin-left: auto; width: 71px; height: 24px; gap: 5px; border-radius: 4px; background: #38a660; color: #0a1a10; }

/* Ribbon */
.ribbon { display: flex; flex: none; height: 100px; margin: 0 8px; background: #292929; border-radius: 8px; }
.sep { width: 1px; margin: 5px 0 6px; background: #5c5c5c; }
.group { display: flex; flex-direction: column; flex: none; }
.g-clip { width: 103px; } .g-font { width: 235px; } .g-align { width: 293px; } .g-num { width: 161px; }
.g-style { width: 197px; } .g-cells { width: 97px; } .g-edit { width: 148px; } .g-add { width: 62px; }
.body { display: flex; height: 80px; padding-top: 5px; }
.two { display: flex; flex-direction: column; gap: 8px; padding: 7px 0 0 8px; }
.body.two { padding-top: 12px; }
.col { display: flex; flex-direction: column; gap: 2px; }
.row { display: flex; align-items: center; height: 24px; }
.near { gap: 2px; }
.even { gap: 2px; }
.b { width: 24px; height: 24px; color: #ddd; }
.c { width: 12px; height: 24px; }
.snug { margin-left: -3px; }
.gap2 { margin-left: 2px; }
.gap5 { margin-left: 5px; }
.boxed { border: 1px solid #a8a8a8; border-radius: 4px; background: #3a3a3a; }
.strong { font-weight: 700; }
.ital { font: italic 15px "Liberation Serif", serif; }
.under { text-decoration: underline; text-underline-offset: 3px; }
.glyph { font-size: 17px; color: #ccc; }
.vs { width: 1px; height: 24px; margin: 0 2px 0 5px; background: #5c5c5c; }
.vs.tight { margin: 0 2px; }
.even .vs { margin: 0; }
.mid { width: 1px; height: 62px; margin: 6px 0 0 6px; background: #5c5c5c; }
.two.wraps { padding-left: 10px; }
.foot { display: flex; align-items: center; height: 20px; font-size: 11px; }
.foot span { flex: 1; text-align: center; }
.g-clip .foot { padding-left: 4px; }
.l { width: 16px; height: 16px; }
.pick { position: relative; display: flex; }
.pick select { appearance: none; height: 24px; padding: 1px 2px 0; border: 1px solid #6b6b6b; border-radius: 4px; background: #292929; }
.pick svg { position: absolute; right: 3px; top: 8px; pointer-events: none; }
.face { width: 123px; } .size { width: 43px; } .fmt { width: 146px; }
.big { flex-direction: column; justify-content: flex-start; height: 72px; padding-top: 3px; gap: 4px; text-align: center; white-space: nowrap; }
.big span svg { display: inline-block; margin-left: 2px; }
.w80 { width: 80px; } .w58 { width: 58px; } .w48 { width: 48px; } .w46 { width: 46px; } .w63 { width: 62px; }
.g-style .body { padding-left: 5px; }
.g-clip .body { padding-left: 8px; }
.paste { width: 48px; gap: 3px; }
.wide-b { justify-content: flex-start; height: 24px; gap: 4px; white-space: nowrap; }
.far { margin-left: 4px; }
.cell { padding-left: 12px; }
.cell.tightly { gap: 3px; }
.mid-c { margin-left: 4px; }
.edit-col { width: 39px; margin-left: 8px; }
.collapse { width: 24px; height: 20px; margin: 80px 6px 0 auto; }

/* Formula bar */
.formula { display: flex; align-items: center; flex: none; height: 41px; padding: 0 8px; }
.name, .fx, .bar { display: flex; align-items: center; height: 26px; margin-top: 1px; background: #292929; border: 1px solid #5e5e5e; border-radius: 4px; }
.name { width: 102px; padding: 0 4px 0 6px; }
.name input { flex: 1; }
.dots { width: 2px; height: 11px; margin: 0 9px; background: radial-gradient(circle, #ddd 1px, transparent 1px) 0 0 / 2px 4px; }
.fx { width: 74px; margin-right: 4px; justify-content: space-around; }
.fn { font: italic 18px "Liberation Serif", serif; color: #ddd; }
.bar { flex: 1; padding: 0 3px; }
.bar input { flex: 1; }

/* Worksheet */
.work { display: flex; flex: 1; min-height: 0; }
.sheet { position: relative; flex: 1; min-width: 0; overflow: hidden; background: #fff; color: #000; }
.grid { width: 100%; table-layout: fixed; border-collapse: separate; border-spacing: 0; font-size: 13px; line-height: 18px; }
.w26 { width: 26px; } .w102 { width: 102px; } .w183 { width: 183px; } .w64 { width: 64px; } .w123 { width: 123px; } .w105 { width: 105px; } .w145 { width: 145px; } .w63 { width: 63px; } .w158 { width: 158px; } .w92 { width: 92px; }
.grid th { height: 20px; padding: 0; background: #0a0a0a; color: #d0d0d0; font-weight: 400; text-align: center; border-right: 1px solid #5a5a5a; border-bottom: 1px solid #777; }
.grid tbody th { border-right-color: #aaa; border-bottom-color: #444; }
.grid .corner svg { margin: 4px 0 0 11px; }
.grid thead .cur { background: #606060; border-bottom: 2px solid #217346; }
.grid tbody .cur { background: #606060; border-right: 2px solid #217346; }
.grid td { height: 20px; padding: 0 7px; white-space: nowrap; border-right: 1px solid #d9d9d9; border-bottom: 1px solid #d9d9d9; }
.grid .l { border-right: 0; border-bottom-color: transparent; }
.grid .n { text-align: right; padding-right: 6px; border-bottom-color: transparent; }
.grid .ln { border-bottom-color: #95b3d7; }
.grid .gt { background: #dce6f1; font-weight: 600; border-right-color: transparent; }
.grid .hd { background: #dce6f1; font-weight: 600; padding: 0 0 0 7px; border-right: 0; border-bottom-color: #95b3d7; }
.hd div { display: flex; justify-content: space-between; align-items: center; }
.hd button { width: 17px; height: 17px; margin-right: 1px; border: 1px solid #a9b0ba; background: linear-gradient(#fff, #eceff4); color: #666; }
.grid .yel { background: #ff0; border-color: #ff0; }
.grid .blk { background: #000; color: #fff; border-color: #000; }
.grid .active { position: relative; }
.active::before { content: ""; position: absolute; inset: -2px; border: 2px solid #217346; }
.active::after { content: ""; position: absolute; right: -4px; bottom: -4px; width: 6px; height: 6px; background: #217346; border: 1px solid #fff; border-width: 1px 0 0 1px; }

/* Charts float over the cells */
.chart { position: absolute; margin: 0; background: #fff; border: 1px solid #d9d9d9; color: #595959; font-size: 11px; }
.donut { left: 123px; top: 265px; width: 370px; height: 280px; padding: 7px 9px 0 10px; }
.line { left: 520px; top: 262px; width: 395px; height: 280px; padding: 7px 10px 0; }
.field { height: 17px; padding: 0 2px; gap: 4px; color: #000; background: linear-gradient(#dcdcdc, #c0c0c0); }
.chart figcaption { margin-top: 11px; font-size: 17px; line-height: 24px; text-align: center; }
.plot { display: flex; }
.donut .plot { padding: 16px 0 0 58px; }
.legend { margin: 5px 0 0 auto; }
.legend ul { list-style: none; margin: 0; padding: 0 0 0 6px; }
.legend li { display: flex; align-items: center; gap: 4px; height: 23px; }
.legend li::before { content: ""; width: 5px; height: 5px; }
.s1::before { background: #4f81bd; } .s2::before { background: #c0504d; } .s3::before { background: #9bbb59; } .s4::before { background: #8064a2; }
.line .plot { gap: 14px; }
.axis { list-style: none; margin: -1px 0 0; padding: 0; width: 48px; text-align: right; line-height: 18px; }
.key { display: flex; align-items: center; height: 18px; margin: 81px 0 0 -9px; }
.key i { width: 28px; height: 3px; border-radius: 2px; background: #4f81bd; }

/* Scroll bars */
.vscroll { display: flex; flex-direction: column; align-items: center; flex: none; width: 22px; padding: 6px 0 3px; background: #111; }
.vscroll i { width: 9px; height: 202px; margin: auto 0 91px; border-radius: 4px; background: #9a9a9a; }
.right { display: flex; align-items: center; margin-left: auto; }
.hscroll { display: flex; align-items: center; width: 512px; height: 17px; padding: 0 6px; border-radius: 8px; background: #151515; }
.hscroll i { width: 363px; height: 9px; margin: 0 auto 0 6px; border-radius: 4px; background: #9a9a9a; }

/* Sheet tabs */
.sheets { display: flex; align-items: center; flex: none; height: 32px; padding: 0 18px 2px 16px; border-top: 1px solid #444; font-size: 13px; }
.nav { width: 32px; height: 24px; }
.stab { padding: 0 13px; height: 18px; line-height: 18px; border-right: 1px solid #666; }
.stab.second { border-left: 1px solid #666; }
.stab.on { align-self: flex-start; height: 29px; margin: -1px 4px 0 36px; padding: 4px 8px 0; border: 0; border-radius: 0 0 4px 4px; background: #fff; color: #333; font-weight: 600; font-size: 12px; }
.stab.on span { display: block; height: 22px; border-bottom: 2px solid #107c41; line-height: 20px; }
.add { width: 24px; height: 24px; margin-left: 35px; }
.sheets .dots { margin-right: 13px; }

/* Status bar */
.status { display: flex; align-items: center; flex: none; height: 22px; padding: 0 7px 0 11px; background: #141414; border-top: 1px solid #3c3c3c; font-size: 11px; }
.rec { width: 30px; margin-left: 12px; }
.acc { gap: 3px; margin-left: 9px; font-weight: 600; }
.view { width: 40px; height: 21px; }
.view.on { background: #292929; }
.z { width: 15px; height: 20px; margin-left: 2px; }
.zoom { appearance: none; width: 99px; height: 16px; background: linear-gradient(#999, #999) center / 100% 1px no-repeat; margin-left: 2px; }
.zoom::-webkit-slider-thumb { appearance: none; width: 5px; height: 11px; background: #bbb; }
.pct { margin-left: 9px; }

/* Taskbar */
.taskbar { display: flex; flex: none; height: 40px; background: linear-gradient(90deg, #2e2a24 0, #3a2220 25%, #33231f 30%, #43221f 38%, #33221f 55%, #3a1f1e 63%, #32291f 68%, #2f2a26 72%, #35231f 78%, #3a2a24 92%, #2c2420 100%); }
.start { width: 48px; }
.tsearch { display: flex; align-items: center; width: 288px; gap: 11px; padding: 0 21px 0 11px; background: #323232; border: 1px solid #5c5c5c; font-size: 14px; }
.tsearch input { flex: 1; }
.tsearch input::placeholder { color: #d0d0d0; }
.apps { display: flex; gap: 1px; margin-left: 1px; }
.apps button { width: 48px; }
.apps .open { background: linear-gradient(#76b9ed, #76b9ed) center bottom / 40px 2px no-repeat; }
.apps .now { background: linear-gradient(#76b9ed, #76b9ed) center bottom / 100% 2px no-repeat #5b504b; }
.tray { display: flex; margin: 0 4px 0 auto; border-right: 1px solid #777; }
.tray button { width: 24px; }
.clock { width: 64px; padding-top: 2px; line-height: 18px; text-align: center; }
.tray .note { position: relative; width: 49px; }
.note span { position: absolute; left: 22px; top: 19px; width: 16px; height: 16px; border: 1px solid #aaa; border-radius: 50%; background: #3b3531; font-size: 11px; line-height: 14px; }
```
